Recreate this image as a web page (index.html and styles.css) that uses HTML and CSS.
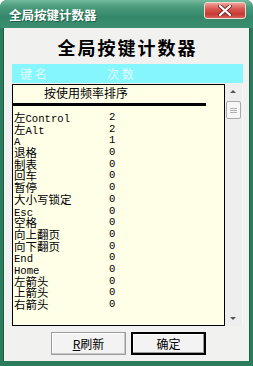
FILE: index.html
```html
<!DOCTYPE html>
<html lang="zh">
<head>
    <meta charset="UTF-8">
    <title>全局按键计数器</title>
    <link rel="stylesheet" href="styles.css">
</head>
<body>
    <div class="window">
        <div class="titlebar">
            <span class="title">全局按键计数器</span>
            <span class="close">
                <svg width="14" height="11" viewBox="0 0 14 11">
                    <path d="M2 1 L12 10 M12 1 L2 10" stroke="#7a2a28" stroke-width="4" stroke-linecap="round"/>
                    <path d="M2 1 L12 10 M12 1 L2 10" stroke="#fff" stroke-width="2.2" stroke-linecap="round"/>
                </svg>
            </span>
        </div>
        <div class="client">
            <h1>全局按键计数器</h1>
            <div class="colhead">
                <span class="c-name">键 名</span>
                <span class="c-count">次 数</span>
            </div>
            <div class="listwrap">
                <div class="list">
                    <div class="sort">按使用频率排序</div>
                    <div class="rule"></div>
                    <div class="rows">
                        <div class="row"><span>左<i>Control</i></span><span>2</span></div>
                        <div class="row"><span>左<i>Alt</i></span><span>2</span></div>
                        <div class="row"><span><i>A</i></span><span>1</span></div>
                        <div class="row"><span>退格</span><span>0</span></div>
                        <div class="row"><span>制表</span><span>0</span></div>
                        <div class="row"><span>回车</span><span>0</span></div>
                        <div class="row"><span>暂停</span><span>0</span></div>
                        <div class="row"><span>大小写锁定</span><span>0</span></div>
                        <div class="row"><span><i>Esc</i></span><span>0</span></div>
                        <div class="row"><span>空格</span><span>0</span></div>
                        <div class="row"><span>向上翻页</span><span>0</span></div>
                        <div class="row"><span>向下翻页</span><span>0</span></div>
                        <div class="row"><span><i>End</i></span><span>0</span></div>
                        <div class="row"><span><i>Home</i></span><span>0</span></div>
                        <div class="row"><span>左箭头</span><span>0</span></div>
                        <div class="row"><span>上箭头</span><span>0</span></div>
                        <div class="row"><span>右箭头</span><span>0</span></div>
                    </div>
                </div>
                <div class="scrollbar">
                    <div class="arrow up"></div>
                    <div class="thumb"><b></b><b></b><b></b></div>
                    <div class="track"></div>
                    <div class="arrow down"></div>
                </div>
            </div>
            <div class="buttons">
                <button class="btn"><u>R</u>刷新</button>
                <button class="btn default">确定</button>
            </div>
        </div>
    </div>
</body>
</html>
```

FILE: styles.css
```css
body {
    margin: 0;
    font-family: "Noto Sans CJK SC", sans-serif;
    font-size: 12px;
}

.window {
    width: 253px;
    height: 366px;
    box-sizing: border-box;
    display: flex;
    flex-direction: column;
    background: #2b7c5c;
    border-radius: 7px 7px 0 0;
    overflow: hidden;
}

.titlebar {
    height: 28px;
    display: flex;
    align-items: flex-start;
    justify-content: space-between;
    background: linear-gradient(#74b99c, #4a9b7b 25%, #34876a 60%, #3b8f6f);
    padding: 0 7px 0 9px;
}

.title {
    color: #fff;
    font-weight: bold;
    font-size: 12.5px;
    line-height: 30px;
    text-shadow: 1px 1px 0 #1f5f47;
}

.close {
    margin-top: 2px;
    width: 40px;
    height: 15px;
    border: 1px solid #f1d8d4;
    border-radius: 3px;
    background: linear-gradient(#eea39a, #d9574f 40%, #c63a33 75%, #d8625a);
    display: flex;
    align-items: center;
    justify-content: center;
}

.client {
    flex: 1;
    margin: 0 3px 5px 3px;
    background: #f1f1f0;
    display: flex;
    flex-direction: column;
    padding: 0 6px 0 8px;
    border-left: 1px solid #1d5d44;
    border-right: 1px solid #1d5d44;
}

h1 {
    margin: 0;
    height: 36px;
    line-height: 38px;
    text-align: center;
    font-size: 18px;
    letter-spacing: 2px;
    font-weight: bold;
    color: #000;
}

.colhead {
    height: 19px;
    background: #86f6fd;
    color: #dffcff;
    line-height: 19px;
    display: flex;
}

.c-name {
    width: 87px;
    padding-left: 8px;
}

.listwrap {
    display: flex;
    height: 242px;
    margin-top: 1px;
}

.list {
    width: 215px;
    box-sizing: border-box;
    border: 1px solid #000;
    background: #ffffe8;
    overflow: hidden;
}

.sort {
    padding-left: 31px;
    line-height: 16px;
}

.rule {
    width: 193px;
    height: 3px;
    background: #000;
    margin-top: 2px;
}

.rows {
    margin-top: 6px;
}

.row {
    display: flex;
    height: 11.7px;
    line-height: 11.7px;
    font-size: 11.5px;
    padding-left: 1px;
}

.row span:first-child {
    width: 95px;
    white-space: nowrap;
}

.row span:last-child,
.row i {
    font-family: "Liberation Mono", monospace;
    font-size: 10.6px;
    font-style: normal;
}

.scrollbar {
    width: 17px;
    display: flex;
    flex-direction: column;
    background: #eeeeef;
    border-right: 1px solid #f7f7f7;
}

.arrow {
    height: 17px;
    position: relative;
}

.arrow::after {
    content: "";
    position: absolute;
    left: 5px;
    border-left: 3px solid transparent;
    border-right: 3px solid transparent;
}

.up::after {
    top: 6px;
    border-bottom: 3px solid #555;
}

.down::after {
    top: 8px;
    border-top: 3px solid #555;
}

.thumb {
    height: 16px;
    margin: 0 1px;
    border: 1px solid #a9aaa9;
    border-radius: 2px;
    background: #f6f6f6;
    display: flex;
    flex-direction: column;
    align-items: center;
    justify-content: center;
    gap: 1px;
}

.thumb b {
    width: 7px;
    height: 1px;
    background: #b0b0b0;
}

.track {
    flex: 1;
}

.buttons {
    display: flex;
    gap: 5px;
    padding-left: 39px;
    margin-top: 6px;
}

.btn {
    width: 75px;
    height: 23px;
    font-family: "Noto Sans CJK SC", sans-serif;
    font-size: 12px;
    background: #f3f3f3;
    border: 1px solid #9c9c9c;
    box-shadow: inset -1px -1px 0 #c8c8c8, inset 1px 1px 0 #fff;
    padding: 0;
    color: #000;
}

.btn.default {
    border: 2px solid #000;
    box-shadow: inset -1px -1px 0 #999, inset 1px 1px 0 #fff;
}
```
